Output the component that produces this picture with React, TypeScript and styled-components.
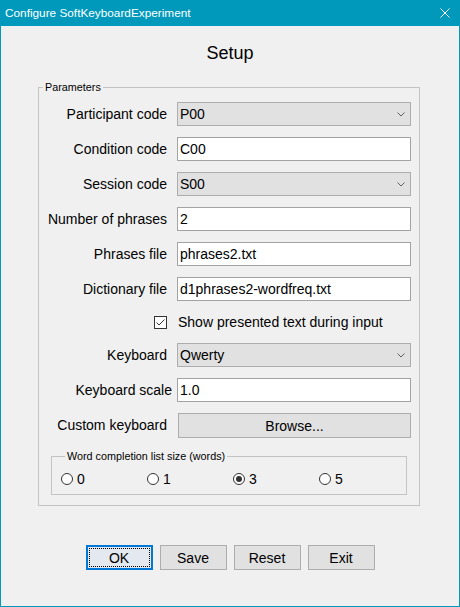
import React from 'react';
import styled, { createGlobalStyle } from 'styled-components';

const GlobalStyle = createGlobalStyle`
  html, body {
    margin: 0;
    padding: 0;
    background: #f0f0f0;
  }
  body {
    font-family: "Liberation Sans", Arial, sans-serif;
    color: #000;
  }
  * {
    box-sizing: border-box;
  }
`;

const Window = styled.div`
  width: 460px;
  height: 607px;
  display: flex;
  flex-direction: column;
  background: #f0f0f0;
  border: 1px solid #0099bc;
  border-top: none;
`;

const TitleBar = styled.div`
  height: 26px;
  display: flex;
  align-items: center;
  justify-content: space-between;
  padding: 0 9px 0 4px;
  background: #0099bc;
  color: #fff;
  font-size: 11.8px;
`;

const Heading = styled.h1`
  margin: 16px 0 0;
  font-size: 18px;
  line-height: 22px;
  font-weight: normal;
  text-align: center;
`;

const Group = styled.fieldset<{ $inset?: boolean }>`
  margin: ${p => (p.$inset ? '0 12px 0 13px' : '16px 0 0 37px')};
  width: ${p => (p.$inset ? 'auto' : '382px')};
  padding: ${p => (p.$inset ? '8px 0 7px 9px' : '8px 8px 10px 0')};
  border: 1px solid #c4c4c4;
  min-inline-size: 0;
`;

const Legend = styled.legend`
  margin-left: 4px;
  padding: 0 2px;
  font-size: 10.8px;
  line-height: 14px;
`;

const Form = styled.div`
  display: grid;
  grid-template-columns: 128px 234px;
  column-gap: 10px;
  row-gap: 11px;
`;

const Label = styled.div<{ $overhang?: number }>`
  height: 24px;
  line-height: 24px;
  font-size: 14px;
  text-align: right;
  white-space: nowrap;
  margin-right: ${p => -(p.$overhang ?? 0)}px;
`;

const TextField = styled.input`
  height: 24px;
  width: 100%;
  margin: 0;
  padding: 0 2px;
  border: 1px solid #a3a3a3;
  background: #fff;
  font-family: inherit;
  font-size: 14px;
  color: #000;
  outline: none;
`;

const Combo = styled.div`
  height: 24px;
  display: flex;
  align-items: center;
  justify-content: space-between;
  padding: 0 5px 0 2px;
  border: 1px solid #adadad;
  background: #e1e1e1;
  font-size: 14px;
`;

const CheckCell = styled.div`
  height: 20px;
  display: flex;
  align-items: center;
  justify-content: flex-end;
`;

const CheckBox = styled.span`
  width: 13px;
  height: 13px;
  display: flex;
  border: 1px solid #333;
  background: #fff;
`;

const CheckText = styled.div`
  height: 20px;
  line-height: 20px;
  padding-left: 1px;
  font-size: 14px;
`;

const Button = styled.button<{ $default?: boolean; $wide?: boolean }>`
  position: relative;
  width: ${p => (p.$wide ? '233px' : '67px')};
  height: 25px;
  margin: 0 ${p => (p.$wide ? '0 0 1px' : '0')};
  padding: 0;
  border: 1px solid ${p => (p.$default ? '#0078d7' : '#adadad')};
  box-shadow: ${p => (p.$default ? 'inset 0 0 0 1px #0078d7' : 'none')};
  background: ${p => (p.$default ? '#e3e9ee' : '#e1e1e1')};
  font-family: inherit;
  font-size: 14px;
  color: #000;

  &::after {
    content: '';
    display: ${p => (p.$default ? 'block' : 'none')};
    position: absolute;
    inset: 2px;
    border: 1px dotted #000;
  }
`;

const Wide = styled.div`
  height: 25px;
  display: flex;
  justify-content: flex-end;
`;

const Span2 = styled.div`
  grid-column: 1 / span 2;
  margin-left: -1px;
  margin-right: -8px;
`;

const Radios = styled.div`
  display: grid;
  grid-template-columns: repeat(4, 86px);
  height: 16px;
`;

const Radio = styled.label`
  display: flex;
  align-items: center;
  gap: 4px;
  font-size: 14px;
  line-height: 16px;
`;

const Dot = styled.span<{ $on?: boolean }>`
  width: 12px;
  height: 12px;
  border-radius: 50%;
  border: 1px solid #333;
  background: #fff;
  display: flex;
  align-items: center;
  justify-content: center;

  &::after {
    content: '';
    display: ${p => (p.$on ? 'block' : 'none')};
    width: 6px;
    height: 6px;
    border-radius: 50%;
    background: #333;
  }
`;

const Actions = styled.div`
  margin-top: 39px;
  display: flex;
  justify-content: center;
  gap: 7px;
`;

const Chevron = () => (
  <svg width="8" height="5" viewBox="0 0 8 5">
    <polyline points="0.5,0.5 4,4 7.5,0.5" fill="none" stroke="#606060" strokeWidth="1" />
  </svg>
);

const CloseIcon = () => (
  <svg width="10" height="10" viewBox="0 0 10 10">
    <path d="M0.5 0.5 L9.5 9.5 M9.5 0.5 L0.5 9.5" stroke="#fff" strokeWidth="1" />
  </svg>
);

const Check = () => (
  <svg width="11" height="11" viewBox="0 0 11 11">
    <polyline points="1.5,5.5 4,8 9.5,2.5" fill="none" stroke="#333" strokeWidth="1" />
  </svg>
);

export default function App() {
  return (
    <Window>
      <GlobalStyle />
      <TitleBar>
        <span>Configure SoftKeyboardExperiment</span>
        <CloseIcon />
      </TitleBar>
      <Heading>Setup</Heading>
      <Group>
        <Legend>Parameters</Legend>
        <Form>
          <Label>Participant code</Label>
          <Combo>P00<Chevron /></Combo>

          <Label>Condition code</Label>
          <TextField readOnly value="C00" />

          <Label>Session code</Label>
          <Combo>S00<Chevron /></Combo>

          <Label>Number of phrases</Label>
          <TextField readOnly value="2" />

          <Label>Phrases file</Label>
          <TextField readOnly value="phrases2.txt" />

          <Label>Dictionary file</Label>
          <TextField readOnly value="d1phrases2-wordfreq.txt" />

          <CheckCell><CheckBox><Check /></CheckBox></CheckCell>
          <CheckText>Show presented text during input</CheckText>

          <Label>Keyboard</Label>
          <Combo>Qwerty<Chevron /></Combo>

          <Label $overhang={5}>Keyboard scale</Label>
          <TextField readOnly value="1.0" />

          <Label>Custom keyboard</Label>
          <Wide><Button $wide>Browse...</Button></Wide>

          <Span2>
            <Group $inset>
              <Legend>Word completion list size (words)</Legend>
              <Radios>
                {['0', '1', '3', '5'].map(n => (
                  <Radio key={n}>
                    <Dot $on={n === '3'} />
                    {n}
                  </Radio>
                ))}
              </Radios>
            </Group>
          </Span2>
        </Form>
      </Group>
      <Actions>
        <Button $default>OK</Button>
        <Button>Save</Button>
        <Button>Reset</Button>
        <Button>Exit</Button>
      </Actions>
    </Window>
  );
}
